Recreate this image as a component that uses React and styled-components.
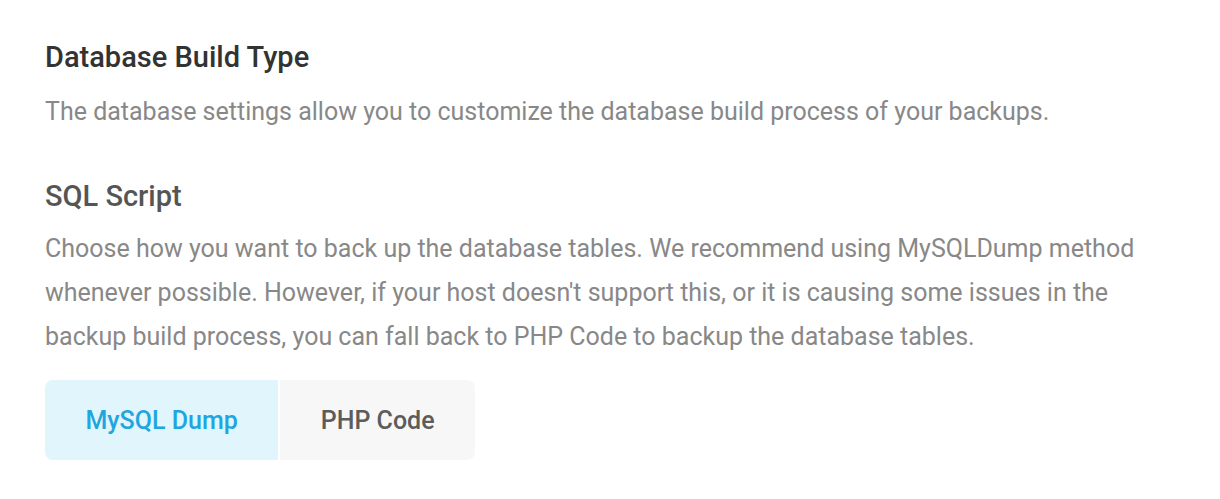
import React, { useState } from "react";
import styled, { createGlobalStyle } from "styled-components";

const GlobalStyle = createGlobalStyle`
  body {
    margin: 0;
    background: #fff;
    font-family: Roboto, "Liberation Sans", sans-serif;
  }
`;

const options = [
  { id: "mysqldump", label: "MySQL Dump" },
  { id: "php", label: "PHP Code" },
];

const App = () => {
  const [method, setMethod] = useState("mysqldump");

  return (
    <StyledPage>
      <GlobalStyle />
      <Section>
        <Title>Database Build Type</Title>
        <Text>
          The database settings allow you to customize the database build
          process of your backups.
        </Text>
      </Section>

      <Section>
        <SubTitle>SQL Script</SubTitle>
        <Text>
          Choose how you want to back up the database tables. We recommend
          using MySQLDump method whenever possible. However, if your host
          doesn't support this, or it is causing some issues in the backup
          build process, you can fall back to PHP Code to backup the database
          tables.
        </Text>
        <Toggle>
          {options.map(opt => (
            <ToggleButton
              key={opt.id}
              $active={method === opt.id}
              onClick={() => setMethod(opt.id)}
            >
              {opt.label}
            </ToggleButton>
          ))}
        </Toggle>
      </Section>
    </StyledPage>
  );
};

const StyledPage = styled.div`
  padding: 38px 45px;
  display: flex;
  flex-direction: column;
  gap: 43px;
`;

const Section = styled.section`
  display: flex;
  flex-direction: column;
`;

const Title = styled.h2`
  margin: 0 0 14px;
  font-size: 29px;
  font-weight: 500;
  line-height: 38px;
  color: #333;
`;

const SubTitle = styled(Title)`
  color: #555;
  margin-bottom: 12px;
`;

const Text = styled.p`
  margin: 0;
  font-size: 25px;
  line-height: 44px;
  color: #888;
`;

const Toggle = styled.div`
  display: flex;
  gap: 2px;
  margin-top: 21px;
  align-self: flex-start;
  border-radius: 8px;
  overflow: hidden;
`;

const ToggleButton = styled.button`
  height: 80px;
  padding: 0 40.5px;
  border: none;
  font-family: inherit;
  font-size: 25px;
  font-weight: 500;
  cursor: pointer;
  color: ${props => (props.$active ? "#1ea6e0" : "#5c5c5c")};
  background: ${props => (props.$active ? "#e1f5fd" : "#f7f7f7")};
`;

export default App;
